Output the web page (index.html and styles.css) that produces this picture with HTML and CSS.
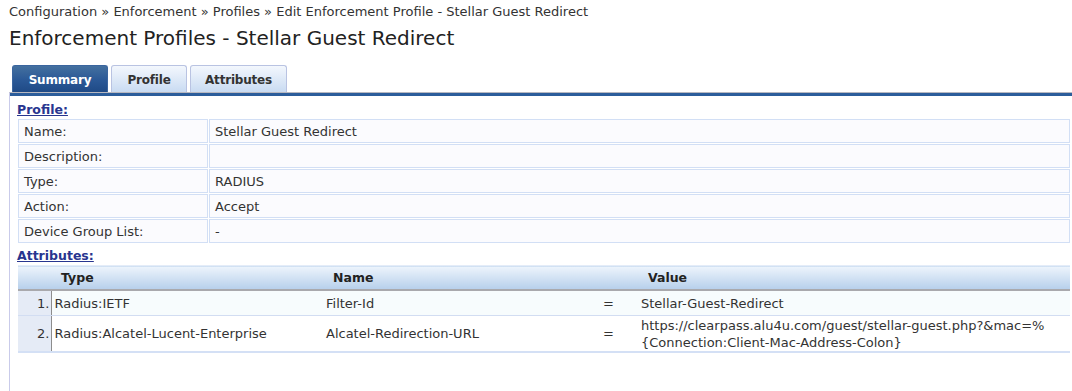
FILE: index.html
```html
<!DOCTYPE html>
<html>
<head>
<meta http-equiv="Content-Type" content="text/html; charset=utf-8"/>
<title>Enforcement Profiles - Stellar Guest Redirect</title>
<link rel="stylesheet" href="styles.css">
</head>
<body>

<div class="crumbs">Configuration &raquo; Enforcement &raquo; Profiles &raquo; Edit Enforcement Profile - Stellar Guest Redirect</div>
<h1 class="title">Enforcement Profiles - Stellar Guest Redirect</h1>

<ul class="tabs">
  <li class="tab active">Summary</li>
  <li class="tab">Profile</li>
  <li class="tab">Attributes</li>
</ul>

<div class="panel">
  <h2 class="sect">Profile:</h2>
  <table class="kv">
    <tr><td class="k">Name:</td><td>Stellar Guest Redirect</td></tr>
    <tr><td class="k">Description:</td><td></td></tr>
    <tr><td class="k">Type:</td><td>RADIUS</td></tr>
    <tr><td class="k">Action:</td><td>Accept</td></tr>
    <tr><td class="k">Device Group List:</td><td>-</td></tr>
  </table>

  <h2 class="sect">Attributes:</h2>
  <table class="grid">
    <colgroup>
      <col class="w-num">
      <col class="w-type">
      <col class="w-name">
      <col class="w-op">
      <col>
    </colgroup>
    <tr>
      <th class="num"></th>
      <th>Type</th>
      <th colspan="2">Name</th>
      <th>Value</th>
    </tr>
    <tr class="odd">
      <td class="num">1.</td>
      <td>Radius:IETF</td>
      <td>Filter-Id</td>
      <td class="op">=</td>
      <td>Stellar-Guest-Redirect</td>
    </tr>
    <tr class="even">
      <td class="num">2.</td>
      <td>Radius:Alcatel-Lucent-Enterprise</td>
      <td>Alcatel-Redirection-URL</td>
      <td class="op">=</td>
      <td>https://clearpass.alu4u.com/guest/stellar-guest.php?&amp;mac=%<br>{Connection:Client-Mac-Address-Colon}</td>
    </tr>
  </table>
</div>

</body>
</html>
```

FILE: styles.css
```css
body {
  margin: 0;
  padding: 0 0 0 9px;
  font-family: "DejaVu Sans", Verdana, sans-serif;
  font-size: 13px;
  color: #333;
  background-color: white;
}

.crumbs {
  padding-top: 4px;
  height: 21px;
  line-height: 16px;
}

.title {
  margin: 0;
  font-size: 20px;
  font-weight: normal;
  line-height: 26px;
  height: 40px;
  color: #222;
}

.tabs {
  list-style: none;
  margin: 0 0 0 3px;
  padding: 0;
  display: flex;
  gap: 3px;
  height: 27px;
}

.tab {
  box-sizing: border-box;
  height: 27px;
  padding: 7px 0 0 0;
  text-align: center;
  font-size: 12px;
  font-weight: bold;
  letter-spacing: -0.2px;
  color: #333;
  border: 1px solid #b9c3e2;
  border-bottom: none;
  border-radius: 3px 3px 0 0;
  background: linear-gradient(#f3f7fd, #c9dbf2);
}

.tab:nth-child(1) { width: 96px; }
.tab:nth-child(2) { width: 76px; }
.tab:nth-child(3) { width: 97px; }

.tab.active {
  color: white;
  border-color: #3a659f;
  background: linear-gradient(#44709f, #2a5896 55%, #1f4a86);
}

.panel {
  border-top: 1px solid #b8b8c0;
  box-shadow: inset 0 3px 0 #2c5d9b;
  border-left: 1px solid #c9cbea;
  padding: 10px 0 40px 7px;
}

.sect {
  margin: 0 0 1px 0;
  font-size: 12.5px;
  line-height: 14px;
  color: #28358f;
  text-decoration: underline;
}

.kv {
  width: 1054px;
  border-collapse: separate;
  border-spacing: 1px;
  margin-bottom: 5px;
}

.kv td {
  height: 24px;
  padding: 0 5px;
  border: 1px solid #d2dff5;
  background-color: #fbfbfe;
  box-sizing: border-box;
}

.kv td.k {
  width: 190px;
}

.grid {
  width: 1052px;
  table-layout: fixed;
  border-collapse: collapse;
  margin: 2px 0 0 1px;
  border-bottom: 2px solid #d4e0f5;
}

.w-num { width: 33px; }
.w-type { width: 272px; }
.w-name { width: 274px; }
.w-op { width: 41px; }

.grid th {
  height: 23px;
  text-align: left;
  padding: 0 0 0 10px;
  font-size: 12.5px;
  border-top: 1px solid #e4ecf8;
  border-bottom: 2px solid #a9a9ad;
  background: linear-gradient(#edf4fc, #b6cfeb);
  color: #222;
}

.grid td {
  padding: 0 3px;
  line-height: 17px;
  border-bottom: 1px solid #d2ddf2;
  white-space: nowrap;
}

.grid tr.odd td {
  height: 24px;
  background-color: #f7fcfd;
}

.grid tr.even td {
  height: 35px;
}

.grid td.num {
  text-align: right;
  padding-right: 1px;
  border-right: 1px solid #8d8d8d;
  background-color: #e5ebf6;
}

.grid tr.odd td.num {
  background-color: #e5ebf6;
}

.grid td.op {
  padding-left: 6px;
}
```
